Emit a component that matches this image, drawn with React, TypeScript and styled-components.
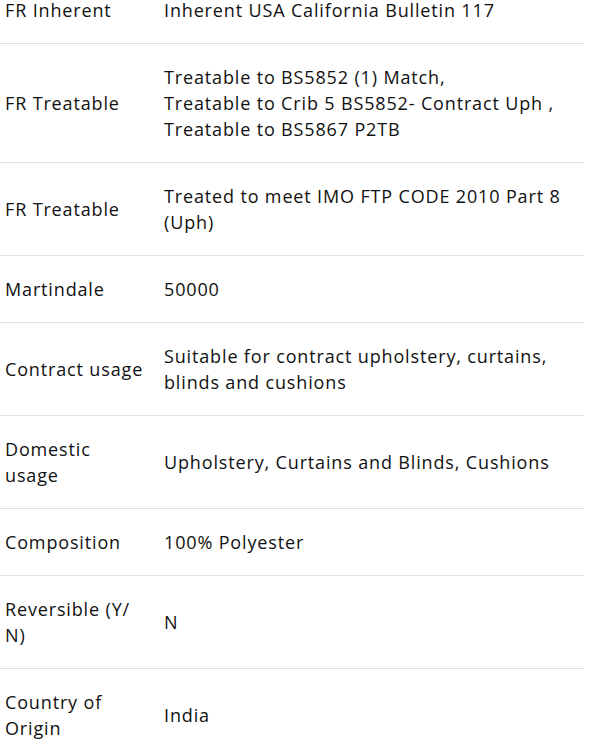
import React from "react";
import styled, { createGlobalStyle } from "styled-components";

const Global = createGlobalStyle`
  html, body { margin: 0; padding: 0; background: #fff; }
  body { font-family: "Open Sans", "Noto Sans", sans-serif; color: #111; }
`;

const Table = styled.div`
  width: 584px;
  margin-top: -23px;
  display: grid;
  grid-template-columns: 159px 1fr;
`;

const Row = styled.div`
  display: contents;
`;

const Cell = styled.div<{ $last?: boolean }>`
  display: flex;
  flex-direction: column;
  justify-content: center;
  padding: 20px 5px 20px 5px;
  font-size: 18px;
  line-height: 26px;
  letter-spacing: 0.85px;
  white-space: nowrap;
  border-bottom: ${(p) => (p.$last ? "none" : "1px solid #e0e0e0")};
`;

const Line = styled.span`
  display: block;
`;

const rows: [string[], string[]][] = [
  [["FR Inherent"], ["Inherent USA California Bulletin 117"]],
  [
    ["FR Treatable"],
    [
      "Treatable to BS5852 (1) Match,",
      "Treatable to Crib 5 BS5852- Contract Uph ,",
      "Treatable to BS5867 P2TB",
    ],
  ],
  [["FR Treatable"], ["Treated to meet IMO FTP CODE 2010 Part 8", "(Uph)"]],
  [["Martindale"], ["50000"]],
  [["Contract usage"], ["Suitable for contract upholstery, curtains,", "blinds and cushions"]],
  [["Domestic", "usage"], ["Upholstery, Curtains and Blinds, Cushions"]],
  [["Composition"], ["100% Polyester"]],
  [["Reversible (Y/", "N)"], ["N"]],
  [["Country of", "Origin"], ["India"]],
];

export default function App() {
  return (
    <>
      <Global />
      <Table>
        {rows.map(([k, v], i) => (
          <Row key={i}>
            <Cell $last={i === rows.length - 1}>
              {k.map((l, j) => (
                <Line key={j}>{l}</Line>
              ))}
            </Cell>
            <Cell $last={i === rows.length - 1}>
              {v.map((l, j) => (
                <Line key={j}>{l}</Line>
              ))}
            </Cell>
          </Row>
        ))}
      </Table>
    </>
  );
}
